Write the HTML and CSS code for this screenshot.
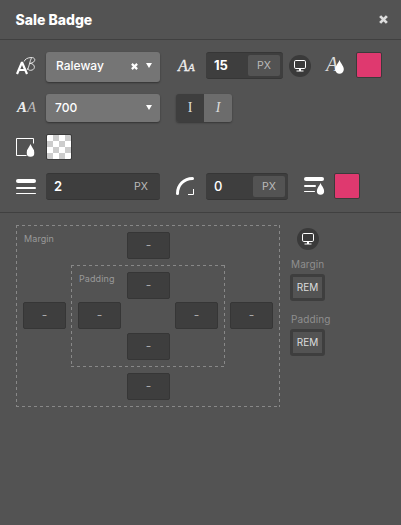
FILE: index.html
```html
<!DOCTYPE html>
<html lang="en">
<head>
    <meta charset="UTF-8">
    <meta name="viewport" content="width=device-width, initial-scale=1.0">
    <title>Sale Badge</title>
    <link rel="stylesheet" href="styles.css">
</head>
<body>
    <svg class="defs" width="0" height="0">
        <symbol id="monitor" viewBox="0 0 22 22">
            <rect x="5.500" y="5.500" width="11" height="8" rx="1.300" fill="none" stroke="#fff"/>
            <path d="M10 13.500h2v2h2.500v1h-7v-1H10z" fill="#fff"/>
        </symbol>
        <symbol id="drop" viewBox="0 0 8 13">
            <path d="M4 0C4.800 2.700 8 5.500 8 8.700a4 4 0 0 1-8 0C0 5.500 3.200 2.700 4 0z" fill="#fff"/>
        </symbol>
        <symbol id="cross" viewBox="0 0 8 8">
            <path d="M1 1l6 6M7 1L1 7" fill="none" stroke="currentColor" stroke-width="2.500"/>
        </symbol>
    </svg>

    <div class="header">
        <h1>Sale Badge</h1>
        <svg class="close"><use href="#cross"/></svg>
    </div>

    <div class="controls">
        <div class="row row-font">
            <svg class="icon" width="22" height="27" viewBox="0 0 22 27">
                <path d="M1 22L6 10.300 11 22M2.700 18h6.600" fill="none" stroke="#fff" stroke-width="2.200" stroke-linejoin="bevel"/>
                <path d="M8.200 9.500C8.600 7.300 11.500 5.700 15 5.500c5.400-.3 5.100 5.400-1.500 5.900 6.100-.2 6.500 6.700 1.200 6.900-2 .1-3.300-.9-2.700-2.300M15.400 6.100c-1.600 2.700-2 8.500-4.200 11.800" fill="none" stroke="#eee" stroke-width=".9"/>
            </svg>
            <div class="select select-font">
                <span>Raleway</span>
                <svg class="clear"><use href="#cross"/></svg>
                <i class="caret"></i>
            </div>
            <div class="letters letters-size"><span>A</span><small>A</small></div>
            <div class="field field-size"><b class="bold">15</b><span class="unit">PX</span></div>
            <div class="device"><svg width="22" height="22"><use href="#monitor"/></svg></div>
            <div class="letter-color">A<svg class="drop"><use href="#drop"/></svg></div>
            <div class="swatch pink"></div>
        </div>

        <div class="row row-weight">
            <div class="letters letters-weight"><strong>A</strong><span>A</span></div>
            <div class="select"><span>700</span><i class="caret"></i></div>
            <div class="toggle"><span class="active">I</span><span class="italic">I</span></div>
        </div>

        <div class="row row-bg">
            <svg class="icon" width="22" height="26" viewBox="0 0 22 26">
                <path d="M17.500 9.500v-5h-17v17h10" fill="none" stroke="#fff"/>
                <use href="#drop" x="10.500" y="10" width="8" height="13"/>
            </svg>
            <div class="swatch checker"></div>
        </div>

        <div class="row">
            <svg class="icon" width="22" height="27" viewBox="0 0 22 27">
                <rect y="6" width="20" height="4" rx="2" fill="#fff"/>
                <rect y="14" width="20" height="2" rx="1" fill="#fff"/>
                <rect y="20" width="20" height="1" rx=".5" fill="#fff"/>
            </svg>
            <div class="field field-border"><b>2</b><span class="unit flat">PX</span></div>
            <svg class="radius-icon" width="20" height="27" viewBox="0 0 20 27">
                <path d="M1.500 20.500C1.500 12 8 5.500 16.500 5.500" fill="none" stroke="#fff" stroke-width="3" stroke-linecap="round"/>
                <path d="M17.500 16v5.500H12" fill="none" stroke="#fff"/>
            </svg>
            <div class="field field-radius"><b class="regular">0</b><span class="unit">PX</span></div>
            <svg class="line-color" width="22" height="27" viewBox="0 0 22 27">
                <rect y="4" width="20" height="4" rx="2" fill="#fff"/>
                <rect y="12" width="12" height="2" rx="1" fill="#fff"/>
                <rect y="18" width="11" height="1" rx=".5" fill="#fff"/>
                <use href="#drop" x="12.500" y="10" width="8" height="12"/>
            </svg>
            <div class="swatch pink"></div>
        </div>
    </div>

    <div class="spacing">
        <div class="margin-box">
            <span class="box-label">Margin</span>
            <div class="cell top">-</div>
            <div class="cell left">-</div>
            <div class="padding-box">
                <span class="box-label">Padding</span>
                <div class="cell top">-</div>
                <div class="cell left">-</div>
                <div class="cell right">-</div>
                <div class="cell bottom">-</div>
            </div>
            <div class="cell right">-</div>
            <div class="cell bottom">-</div>
        </div>
        <div class="units">
            <div class="device"><svg width="22" height="22"><use href="#monitor"/></svg></div>
            <label>Margin</label>
            <div class="rem">REM</div>
            <label>Padding</label>
            <div class="rem">REM</div>
        </div>
    </div>
</body>
</html>
```

FILE: styles.css
```css
* {
    box-sizing: border-box;
}
body {
    margin: 0;
    height: 525px;
    background: #535353;
    color: #fff;
    font-family: Inter, sans-serif;
    overflow: hidden;
}
svg {
    display: block;
    flex: none;
}
.defs {
    position: absolute;
}
.header {
    display: flex;
    align-items: center;
    justify-content: space-between;
    height: 40px;
    padding: 0 13px 0 15.5px;
    border-bottom: 1px solid #404040;
}
h1 {
    margin: 0;
    font-size: 14px;
    font-weight: 800;
    line-height: 20px;
}
.close {
    width: 9px;
    height: 9px;
    color: #ddd;
}
.controls {
    height: 173px;
    padding: 12px 16px 0;
    border-bottom: 1px solid #404040;
}
.row {
    display: flex;
    align-items: flex-start;
    height: 27px;
}
.row-font {
    height: 42px;
}
.row-weight {
    height: 40px;
}
.row-bg {
    height: 39px;
}
.icon {
    margin-right: 8px;
}
.select {
    display: flex;
    align-items: center;
    width: 114px;
    height: 28px;
    padding: 0 8px 1px 9px;
    border-radius: 3px;
    background: #757575;
    box-shadow: 0 1px 2px rgba(0,0,0,0.4);
    font-size: 12px;
    font-weight: 500;
}
.select span {
    flex: 1;
}
.select-font {
    height: 30px;
    padding-left: 10px;
    padding-bottom: 3px;
}
.clear {
    width: 7px;
    height: 7px;
    margin: 1px 8px 0 0;
}
.caret {
    border: 3px solid transparent;
    border-top: 5px solid #fff;
    border-bottom: 0;
}
.letters {
    font-family: "Liberation Serif", serif;
    font-style: italic;
    line-height: 27px;
    white-space: nowrap;
}
.letters-size {
    width: 29px;
    margin-left: 18px;
    margin-right: -1px;
    font-size: 16px;
    color: #eee;
}
.letters-size span {
    display: inline-block;
    width: 10px;
    -webkit-text-stroke: 0.3px #eee;
}
.letters-size small {
    font-size: 11px;
    -webkit-text-stroke: 0.3px #eee;
}
.letters-weight {
    width: 30px;
    padding-left: 1px;
    font-size: 15px;
    color: #eee;
    line-height: 26px;
}
.letters-weight span {
    color: #bbb;
}
.field {
    display: flex;
    align-items: center;
    justify-content: space-between;
    height: 27px;
    padding: 0 3px 0 8px;
    border: 1px solid #363636;
    border-width: 1px 0;
    border-radius: 3px;
    background: #3e3e3e;
    font-size: 13px;
}
.field b {
    padding-bottom: 2px;
    font-weight: 600;
}
.field b.bold {
    font-weight: 700;
}
.field b.regular {
    font-weight: 500;
}
.field-size {
    width: 77px;
}
.field-border {
    width: 114px;
}
.field-radius {
    width: 82px;
}
.unit {
    width: 32px;
    height: 21px;
    border-radius: 2px;
    background: #535353;
    color: #bbb;
    font-size: 10.5px;
    line-height: 21px;
    text-align: center;
}
.unit.flat {
    background: none;
}
.device {
    width: 22px;
    height: 22px;
    border-radius: 50%;
    background: #3a3a3a;
}
.row .device {
    margin: 3px 15px 0 6px;
}
.letter-color {
    position: relative;
    width: 30px;
    color: #ddd;
    font: italic 20px/25px "Liberation Serif", serif;
}
.letter-color .drop {
    position: absolute;
    left: 9px;
    top: 8px;
    width: 9px;
    height: 14px;
}
.swatch {
    width: 26px;
    height: 26px;
    border: 1px solid #3b3b3b;
    border-radius: 2px;
}
.pink {
    background: #df396f;
}
.checker {
    background: repeating-conic-gradient(#ccc 0 25%, #fff 0 50%) 0 0 / 12px 12px;
}
.toggle {
    display: flex;
    width: 56px;
    height: 28px;
    margin-left: 16px;
    border-radius: 3px;
    box-shadow: 0 1px 2px rgba(0,0,0,0.35);
    color: #ddd;
    font: 14px/28px "Liberation Serif", serif;
    text-align: center;
    overflow: hidden;
}
.toggle span {
    flex: 1;
    background: #6c6c6c;
}
.toggle .active {
    background: #3e3e3e;
}
.toggle .italic {
    font-style: italic;
}
.radius-icon {
    margin: 0 10px 0 16px;
}
.line-color {
    margin: 0 8px 0 16px;
}
.spacing {
    display: flex;
    gap: 10px;
    padding: 12px 16px;
}
.margin-box,
.padding-box {
    position: relative;
    display: grid;
    padding: 7px;
    background:
        repeating-linear-gradient(90deg, #888 0 3px, transparent 3px 6px) 0 0 / 100% 1px no-repeat,
        repeating-linear-gradient(90deg, #888 0 3px, transparent 3px 6px) 0 100% / 100% 1px no-repeat,
        repeating-linear-gradient(#888 0 3px, transparent 3px 6px) 0 0 / 1px 100% no-repeat,
        repeating-linear-gradient(#888 0 3px, transparent 3px 6px) 100% 0 / 1px 100% no-repeat;
}
.margin-box {
    width: 264px;
    height: 182px;
    grid-template-columns: 48px 159px 43px;
    grid-template-rows: 33px 108px 27px;
}
.padding-box {
    grid-area: 2 / 2;
    width: 154px;
    height: 102px;
    grid-template-columns: 49px 48px 43px;
    grid-template-rows: 30px 31px 27px;
}
.cell {
    width: 43px;
    height: 27px;
    border: 1px solid #363636;
    border-radius: 2px;
    background: #3e3e3e;
    color: #aaa;
    font-size: 12px;
    line-height: 24px;
    text-align: center;
}
.top {
    grid-area: 1 / 2;
}
.left {
    grid-area: 2 / 1;
}
.right {
    grid-area: 2 / 3;
}
.bottom {
    grid-area: 3 / 2;
}
.margin-box > .top,
.margin-box > .bottom {
    margin-left: 56px;
}
.margin-box > .left,
.margin-box > .right {
    margin-top: 37px;
}
.box-label {
    position: absolute;
    left: 8px;
    top: 8px;
    color: #999;
    font-size: 9px;
    line-height: 12px;
    letter-spacing: 0.1px;
}
.units {
    padding-top: 3px;
}
.units .device {
    margin-left: 7px;
}
.units label {
    display: block;
    height: 24px;
    padding: 6px 0 0 1px;
    color: #8f8f8f;
    font-size: 10px;
    line-height: 16px;
    letter-spacing: 0.1px;
}
.units .rem + label {
    height: 28px;
    padding-top: 10px;
}
.rem {
    width: 35px;
    height: 27px;
    border: 3px solid #3e3e3e;
    border-radius: 3px;
    color: #ddd;
    font-size: 10px;
    line-height: 21px;
    text-align: center;
}
```
